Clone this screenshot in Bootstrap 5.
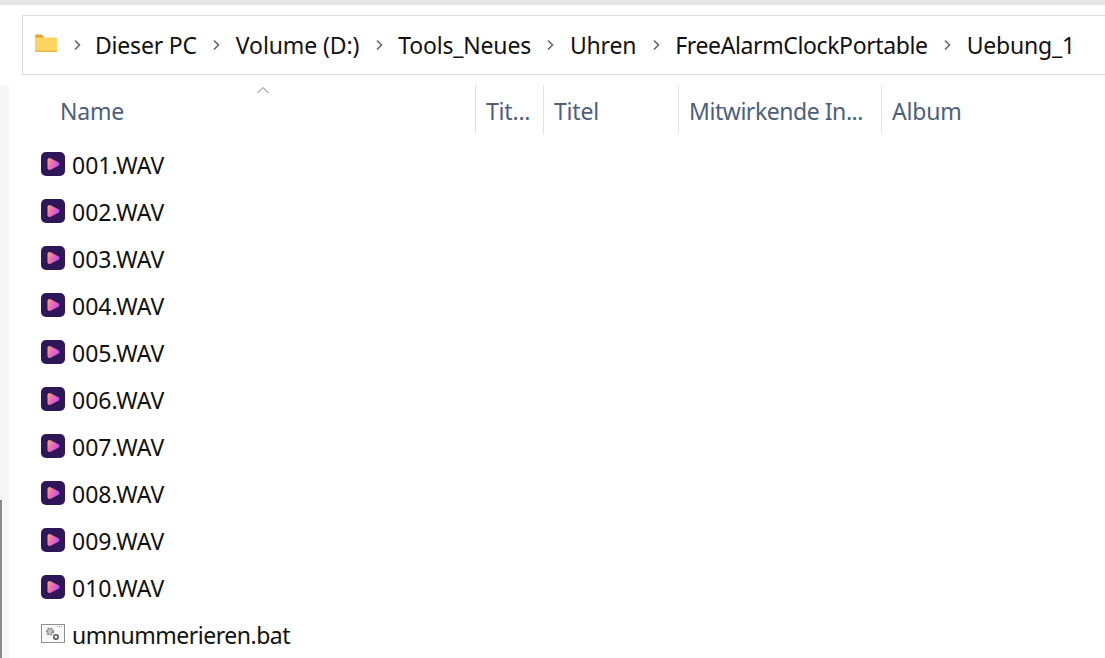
<!DOCTYPE html>
<html lang="de">
<head>
  <meta charset="UTF-8" />
  <title>Uebung_1</title>
  <link href="https://cdn.jsdelivr.net/npm/bootstrap@5.3.0/dist/css/bootstrap.min.css" rel="stylesheet" />
  <style>
    body {
      font-family: "Noto Sans", "Open Sans", sans-serif;
      background: #fff;
      width: 1105px;
      height: 658px;
      overflow: hidden;
      color: #111;
    }
    .top-line { height: 5px; background: #e4e4e4; }
    .addr-wrap { padding: 10px 0 0 22px; }
    .addr-bar {
      height: 60px;
      border: 1px solid #dcdcdc;
      border-right: 0;
      padding-left: 11px;
      font-size: 23px;
      letter-spacing: -0.2px;
    }
    .folder-ico { margin-top: -4px; flex: none; }
    .chev { width: 10px; margin: 0 14.5px; flex: none; }
    .chev-first { margin-left: 14px; margin-right: 13px; }
    .path-long { letter-spacing: -0.38px; }
    .path-wide { letter-spacing: -0.1px; }
    .side-strip { width: 9px; height: 573px; margin-top: 10px; background: #f6f6f6; flex: none; position: relative; }
    .side-strip::after { content: ""; position: absolute; left: 0; top: 415px; width: 2px; bottom: 0; background: #8a8a8a; }
    .files { flex: 1; position: relative; }
    .head-row { height: 49px; margin-top: 10px; color: #4c607a; font-size: 23px; letter-spacing: -0.2px; }
    .head-cell { height: 49px; padding: 3px 0 0 10px; border-left: 1px solid #e2e2e2; flex: none; }
    .head-name { width: 466px; padding-left: 51px; border-left: 0; }
    .head-long { letter-spacing: -0.45px; }
    .sort-caret { position: absolute; left: 247px; top: 11px; width: 14px; }
    .file-list { padding: 8px 0 0 32px; }
    .file-row { height: 47px; font-size: 23px; gap: 7px; }
    .bat-name { letter-spacing: -0.48px; }
    .file-ico { width: 24px; height: 24px; flex: none; margin-top: -4px; }
  </style>
</head>
<body>
  <div class="top-line"></div>
  <div class="addr-wrap">
    <div class="addr-bar d-flex align-items-center">
      <svg width="24" height="20" viewBox="0 0 24 20" class="folder-ico">
        <path d="M1 3a1.500 1.500 0 0 1 1.500-1.500h5l2.500 2.500v2H1z" fill="#e0a92e"/>
        <rect x="1" y="4.500" width="22" height="14.500" rx="1" fill="#fcd462"/>
        <rect x="1" y="17.500" width="22" height="1.500" fill="#ecb93f"/>
      </svg>
      <svg class="chev chev-first" viewBox="0 0 10 12" height="12"><path d="M3 1.500 7.500 6 3 10.500" fill="none" stroke="#6a6a6a" stroke-width="1.700"/></svg>
      <span>Dieser PC</span>
      <svg class="chev" viewBox="0 0 10 12" height="12"><path d="M3 1.500 7.500 6 3 10.500" fill="none" stroke="#6a6a6a" stroke-width="1.700"/></svg>
      <span class="path-wide">Volume (D:)</span>
      <svg class="chev" viewBox="0 0 10 12" height="12"><path d="M3 1.500 7.500 6 3 10.500" fill="none" stroke="#6a6a6a" stroke-width="1.700"/></svg>
      <span>Tools_Neues</span>
      <svg class="chev" viewBox="0 0 10 12" height="12"><path d="M3 1.500 7.500 6 3 10.500" fill="none" stroke="#6a6a6a" stroke-width="1.700"/></svg>
      <span>Uhren</span>
      <svg class="chev" viewBox="0 0 10 12" height="12"><path d="M3 1.500 7.500 6 3 10.500" fill="none" stroke="#6a6a6a" stroke-width="1.700"/></svg>
      <span class="path-long">FreeAlarmClockPortable</span>
      <svg class="chev" viewBox="0 0 10 12" height="12"><path d="M3 1.500 7.500 6 3 10.500" fill="none" stroke="#6a6a6a" stroke-width="1.700"/></svg>
      <span>Uebung_1</span>
    </div>
  </div>
  <div class="d-flex">
    <div class="side-strip"></div>
    <div class="files">
      <svg class="sort-caret" viewBox="0 0 14 8" height="8"><path d="M1.500 7 7 1.500 12.500 7" fill="none" stroke="#777" stroke-width="1"/></svg>
      <div class="head-row d-flex">
        <div class="head-cell head-name d-flex align-items-center">Name</div>
        <div class="head-cell d-flex align-items-center" style="width:68px">Tit...</div>
        <div class="head-cell d-flex align-items-center" style="width:135px">Titel</div>
        <div class="head-cell head-long d-flex align-items-center" style="width:203px">Mitwirkende In...</div>
        <div class="head-cell d-flex align-items-center" style="width:150px">Album</div>
      </div>
      <div class="file-list" id="fileList"></div>
    </div>
  </div>
  <script>
    const list = document.getElementById("fileList");
    const names = ["001", "002", "003", "004", "005", "006", "007", "008", "009", "010"];
    const wavIcon = (id) => `<svg class="file-ico" viewBox="0 0 24 24">
      <defs><linearGradient id="g${id}" x1="0" y1="0" x2="1" y2="0.400"><stop offset="0" stop-color="#f9b06a"/><stop offset="0.450" stop-color="#f06fb0"/><stop offset="1" stop-color="#c050f0"/></linearGradient></defs>
      <rect width="24" height="24" rx="5" fill="#2e1659"/>
      <path d="M6.500 8a2 2 0 0 1 3-1.700l8 4a2 2 0 0 1 0 3.400l-8 4a2 2 0 0 1-3-1.700z" fill="url(#g${id})"/>
    </svg>`;
    names.forEach((n) => {
      list.innerHTML += `<div class="file-row d-flex align-items-center">${wavIcon(n)}<span>${n}.WAV</span></div>`;
    });
    list.innerHTML += `<div class="file-row d-flex align-items-center">
      <svg class="file-ico" viewBox="0 0 24 24">
        <rect x="0.500" y="2.500" width="23" height="18" fill="#fafafa" stroke="#8f8f8f"/>
        <path d="M16 4.500h6" stroke="#999" stroke-width="1" stroke-dasharray="1 1"/>
        <circle cx="9" cy="9.500" r="3.200" fill="#c4c4c4" stroke="#8a8a8a" stroke-width="1.800" stroke-dasharray="2 1"/>
        <circle cx="15" cy="15" r="2.200" fill="#eee" stroke="#555" stroke-width="1.500"/>
      </svg><span class="bat-name">umnummerieren.bat</span></div>`;
  </script>
</body>
</html>
